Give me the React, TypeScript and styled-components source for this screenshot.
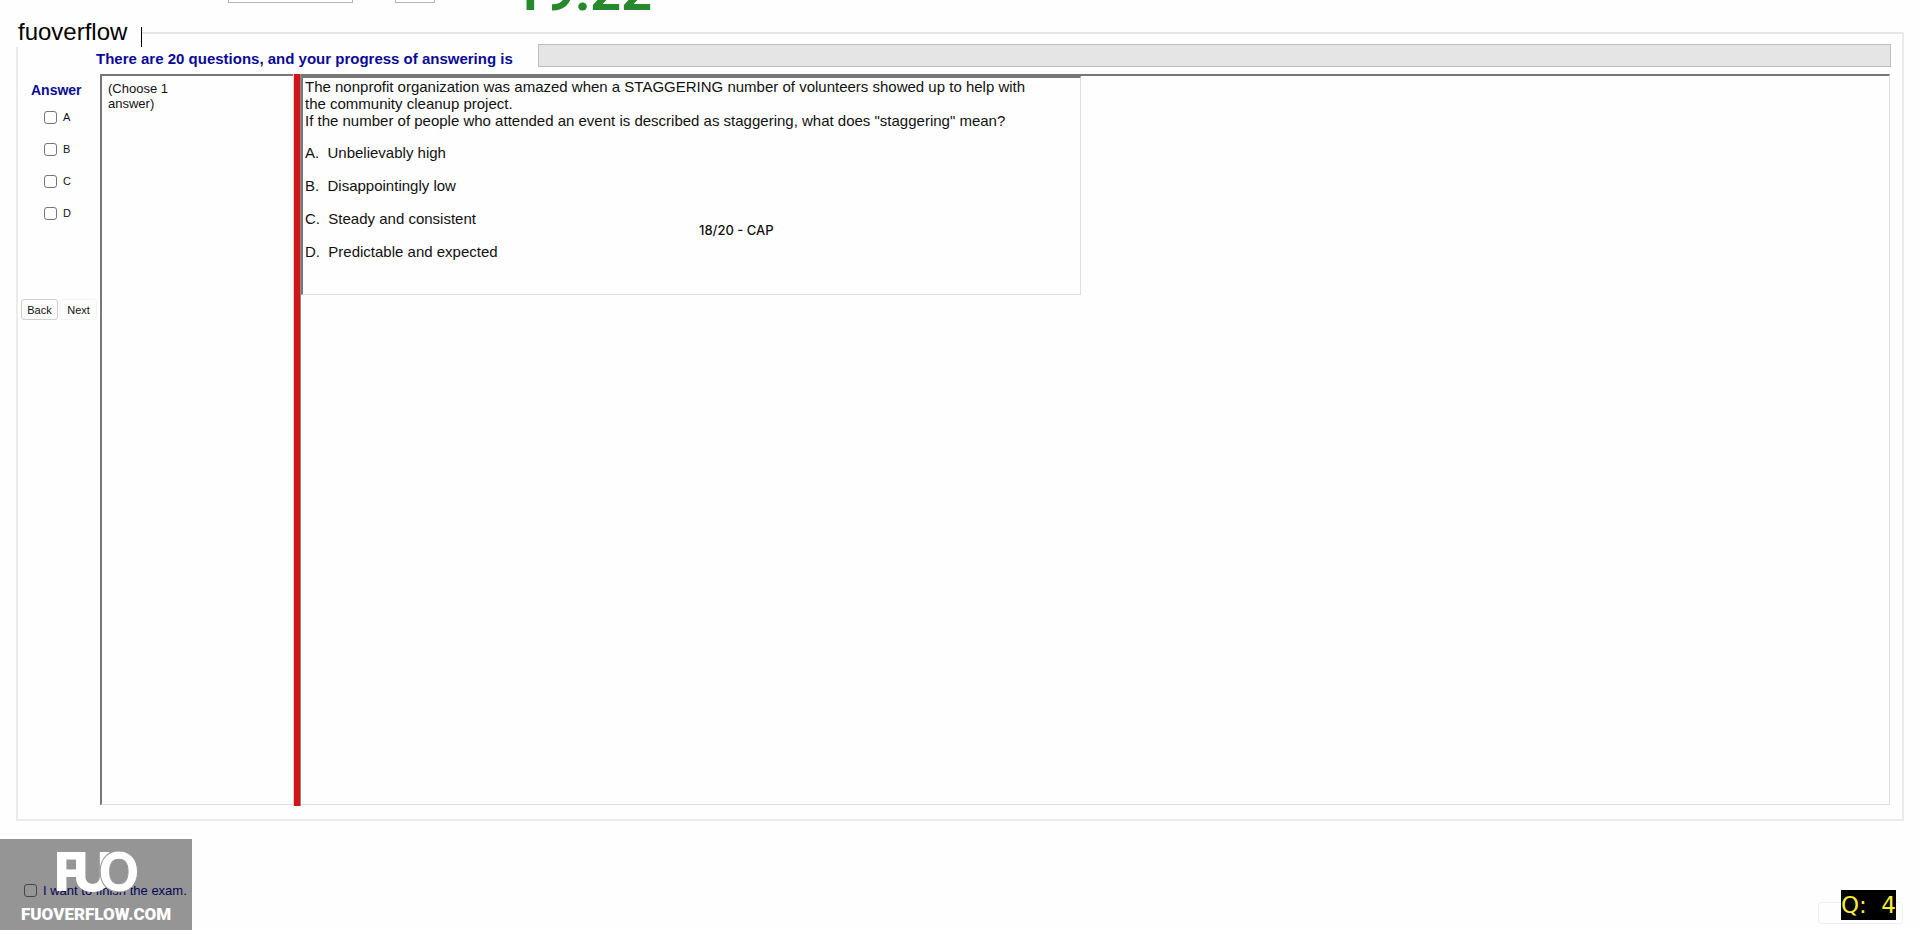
import React from "react";
import styled, { createGlobalStyle } from "styled-components";

const Global = createGlobalStyle`
  * { box-sizing: border-box; }
  html, body, #root { height: 100%; }
  body { margin: 0; background: #fefefe; color: #111; font-family: "Liberation Sans", Arial, sans-serif; font-size: 15px; overflow: hidden; }
`;

const Page = styled.div`
  position: relative;
  display: flex;
  flex-direction: column;
  min-height: 100vh;
  overflow: hidden;
`;

const Header = styled.header`
  display: flex;
  align-items: flex-end;
  height: 20px;
  padding-left: 228px;
  overflow: hidden;
`;

const Picker = styled.select<{ $width: number }>`
  width: ${(p) => p.$width}px;
  height: 22px;
  margin: 0 42px 17px 0;
  border: 1px solid #b4b4b4;
  background: #fff;
`;

const Clock = styled.time`
  margin-left: 36px;
  color: #27882d;
  font-family: Roboto, "Liberation Sans", sans-serif;
  font-size: 54px;
  font-weight: 700;
  line-height: 56px;
`;

const Exam = styled.main`
  display: flex;
  flex-direction: column;
  flex: 1;
  margin: 12px 16px 0 16px;
  border: 2px solid #ebebeb;
  border-top: 0;
`;

const TitleRow = styled.div`
  display: flex;
  align-items: flex-start;
  height: 12px;
  margin-left: -2px;
`;

const Title = styled.h1`
  margin: -15px 0 0 0;
  padding: 0 14px 0 2px;
  background: #fefefe;
  color: #000;
  font-size: 24px;
  font-weight: 400;
  line-height: 30px;
`;

const Caret = styled.span`
  width: 1px;
  height: 20px;
  margin-top: -5px;
  background: #000;
`;

const TitleRule = styled.div`
  flex: 1;
  border-top: 2px solid #e6e6e6;
`;

const ProgressRow = styled.div`
  display: flex;
  align-items: center;
  margin: 0 11px 0 78px;
`;

const ProgressLabel = styled.label`
  width: 442px;
  padding-top: 6px;
  color: #0a0a96;
  font-weight: 700;
  line-height: 17px;
`;

const ProgressTrack = styled.div`
  flex: 1;
  height: 23px;
  border: 1px solid #bcbcbc;
  background: #e5e5e5;
`;

const Body = styled.div`
  display: flex;
  flex: 1;
  margin: 7px 12px 14px 0;
`;

const Side = styled.form`
  display: flex;
  flex-direction: column;
  width: 82px;
`;

const SideTitle = styled.h2`
  margin: 7px 0 2px 13px;
  color: #0a0a96;
  font-size: 14px;
  line-height: 18px;
`;

const Option = styled.label`
  display: flex;
  align-items: center;
  gap: 6px;
  height: 32px;
  margin-left: 26px;
  font-size: 11px;
`;

const Tick = styled.input`
  appearance: none;
  width: 13px;
  height: 13px;
  margin: 0;
  border: 1px solid #777;
  border-radius: 3px;
  background: transparent;
`;

const Nav = styled.div`
  display: flex;
  gap: 2px;
  margin: 70px 0 0 3px;
`;

const NavButton = styled.button<{ $faint?: boolean }>`
  width: 37px;
  height: 21px;
  padding: 0;
  border: 1px solid ${(p) => (p.$faint ? "#f4f4f4" : "#cfcfcf")};
  border-radius: 3px;
  background: #fefefe;
  color: #111;
  font: 11px "Liberation Sans", Arial, sans-serif;
`;

const Panel = styled.div`
  display: flex;
  flex: 1;
  border: solid #777;
  border-width: 2px 1px 1px 2px;
  border-right-color: #dedede;
  border-bottom-color: #dedede;
`;

const Hint = styled.p`
  width: 191px;
  margin: 0;
  padding: 5px 100px 0 6px;
  font-size: 13px;
  line-height: 15px;
`;

const Splitter = styled.div`
  width: 8px;
  margin: -2px 0;
  border: solid #f6cccc;
  border-width: 0 1px 0 1px;
  border-right-color: #8a8a8a;
  background: #d01418;
`;

const Question = styled.section`
  flex: 1;
`;

const QuestionBox = styled.article`
  position: relative;
  width: 780px;
  height: 219px;
  padding-left: 2px;
  border: solid #777;
  border-width: 2px 1px 1px 2px;
  border-right-color: #dedede;
  border-bottom-color: #dedede;
`;

const Prompt = styled.p`
  margin: 0;
  line-height: 17px;
`;

const Choices = styled.ol`
  margin: 7px 0 0;
  padding: 0;
  list-style: none;
  line-height: 33px;
  white-space: pre;
`;

const Mark = styled.span`
  position: absolute;
  left: 396px;
  top: 144px;
  font: 500 13px/16px Inter, sans-serif;
`;

const Footer = styled.footer`
  display: flex;
  justify-content: space-between;
  align-items: flex-start;
  height: 109px;
  padding: 62px 17px 0 24px;
`;

const FinishCheck = styled.label`
  display: flex;
  align-items: center;
  gap: 6px;
  height: 15px;
  color: #0a0a96;
  font-size: 13px;
`;

const ExitButton = styled.button`
  width: 85px;
  height: 22px;
  margin-top: 19px;
  border: 1px solid #f0f0f0;
  border-radius: 4px;
  background: transparent;
`;

const Watermark = styled.div`
  position: absolute;
  left: 0;
  bottom: 0;
  width: 192px;
  height: 91px;
  background: rgba(0, 0, 0, 0.41);
  pointer-events: none;
`;

const Counter = styled.output`
  position: absolute;
  right: 24px;
  bottom: 10px;
  background: #000;
  color: #f5ea3c;
  font: 23px/30px "DejaVu Sans", sans-serif;
  white-space: pre;
`;

const choices = ["A.  Unbelievably high", "B.  Disappointingly low", "C.  Steady and consistent", "D.  Predictable and expected"];

export default function App() {
  return (
    <Page>
      <Global />
      <Header>
        <Picker $width={125} aria-label="Font" />
        <Picker $width={40} aria-label="Size" />
        <Clock>19:22</Clock>
      </Header>
      <Exam>
        <TitleRow>
          <Title>fuoverflow</Title>
          <Caret />
          <TitleRule />
        </TitleRow>
        <ProgressRow>
          <ProgressLabel id="progress-label">There are 20 questions, and your progress of answering is</ProgressLabel>
          <ProgressTrack role="progressbar" aria-labelledby="progress-label" />
        </ProgressRow>
        <Body>
          <Side>
            <SideTitle>Answer</SideTitle>
            {["A", "B", "C", "D"].map((letter) => (
              <Option key={letter}>
                <Tick type="checkbox" />
                {letter}
              </Option>
            ))}
            <Nav>
              <NavButton type="button">Back</NavButton>
              <NavButton type="button" $faint>Next</NavButton>
            </Nav>
          </Side>
          <Panel>
            <Hint>(Choose 1 answer)</Hint>
            <Splitter />
            <Question>
              <QuestionBox>
                <Prompt>
                  The nonprofit organization was amazed when a STAGGERING number of volunteers showed up to help with
                  <br />
                  the community cleanup project.
                  <br />
                  If the number of people who attended an event is described as staggering, what does "staggering" mean?
                </Prompt>
                <Choices>
                  {choices.map((choice) => (
                    <li key={choice}>{choice}</li>
                  ))}
                </Choices>
                <Mark>18/20 - CAP</Mark>
              </QuestionBox>
            </Question>
          </Panel>
        </Body>
      </Exam>
      <Footer>
        <FinishCheck>
          <Tick type="checkbox" />
          I want to finish the exam.
        </FinishCheck>
        <ExitButton type="button" aria-label="Exit" />
      </Footer>
      <Watermark>
        <svg width="192" height="91" viewBox="0 0 192 91" fill="#fff">
          <g fontFamily="Inter, sans-serif" fontWeight="800" fontSize="54">
            <text x="54" y="52">F</text>
            <text x="73" y="52">U</text>
            <text x="98" y="52" stroke="#979797" strokeWidth="1">O</text>
          </g>
          <text x="21" y="81" fontFamily="Roboto, sans-serif" fontWeight="900" fontSize="17">FUOVERFLOW.COM</text>
        </svg>
      </Watermark>
      <Counter>Q:  4</Counter>
    </Page>
  );
}
